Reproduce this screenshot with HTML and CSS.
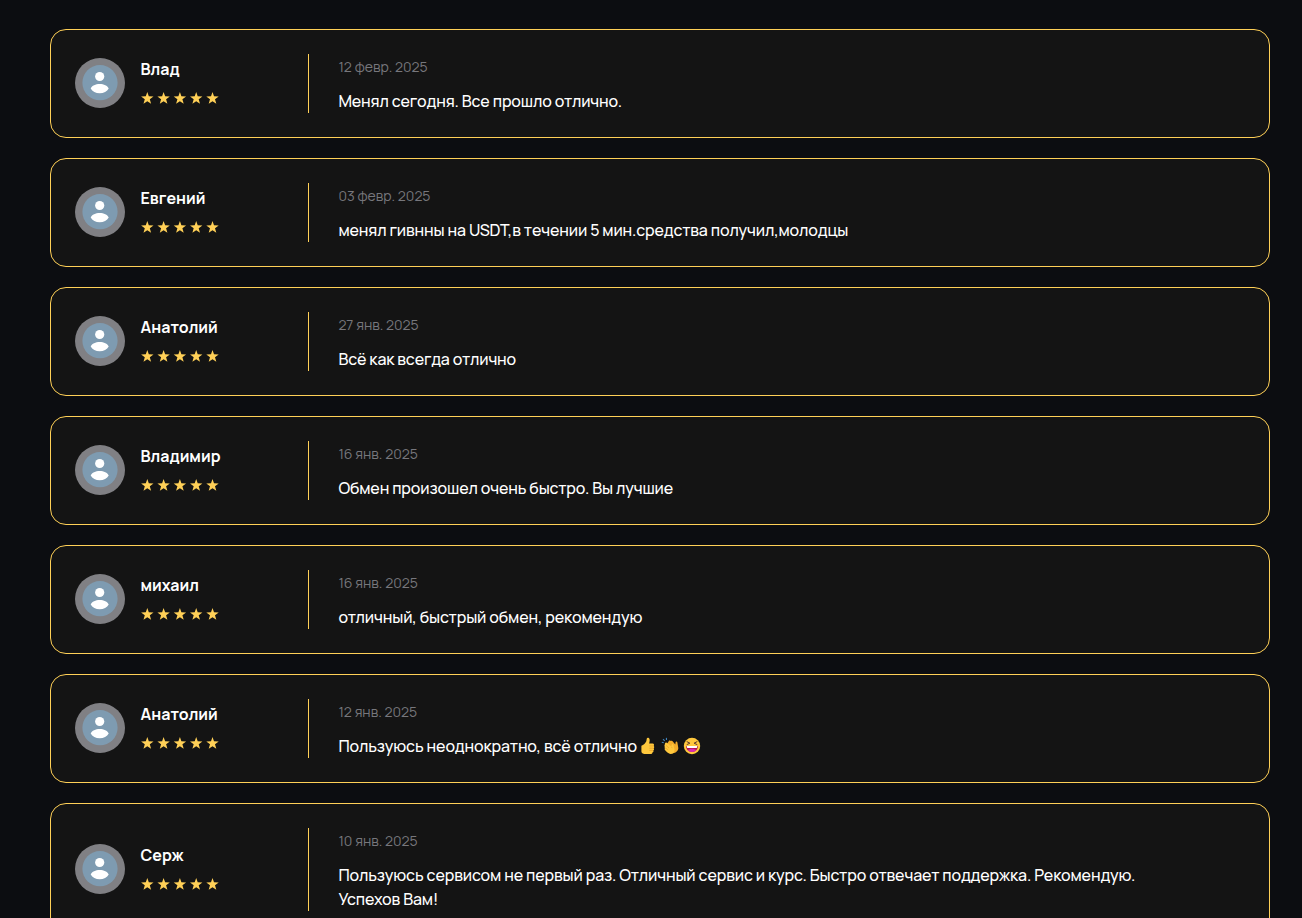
FILE: index.html
```html
<!DOCTYPE html>
<html lang="ru">

<head>
    <meta charset="UTF-8">
    <meta name="viewport" content="width=device-width, initial-scale=1.0">
    <title>Отзывы</title>
    <link rel="stylesheet" href="styles.css">
</head>

<body>
    <!-- shared icons -->
    <svg class="sprite" aria-hidden="true">
        <symbol id="avatar" viewBox="0 0 50 50">
            <circle cx="25" cy="25" r="25" fill="#808084" />
            <circle cx="25" cy="24.7" r="17.6" fill="#7e9bb1" />
            <circle cx="24.7" cy="18.5" r="4.6" fill="#fff" />
            <path d="M15.7 30.5C17 27.4 20.5 25.9 24.7 25.9s7.7 1.5 9 4.6c-1.6 3-5 4.7-9 4.7s-7.4-1.7-9-4.7z" fill="#fff" />
        </symbol>
        <symbol id="stars" viewBox="0 0 79 12">
            <path id="star" d="M6.3 0L7.8 4.3l4.7.1-3.7 2.9 1.3 4.5-3.8-2.6-3.8 2.6L3.8 7.3.1 4.4 4.8 4.3z" fill="#ffd057" />
            <use href="#star" x="16.3" />
            <use href="#star" x="32.6" />
            <use href="#star" x="48.9" />
            <use href="#star" x="65.2" />
        </symbol>
    </svg>

    <main class="reviews">
        <article class="review">
            <div class="author">
                <svg class="avatar"><use href="#avatar" /></svg>
                <div class="author-info">
                    <h3 class="name">Влад</h3>
                    <svg class="stars"><use href="#stars" /></svg>
                </div>
            </div>
            <div class="content">
                <time class="date">12 февр. 2025</time>
                <p class="text">Менял сегодня. Все прошло отлично.</p>
            </div>
        </article>

        <article class="review">
            <div class="author">
                <svg class="avatar"><use href="#avatar" /></svg>
                <div class="author-info">
                    <h3 class="name">Евгений</h3>
                    <svg class="stars"><use href="#stars" /></svg>
                </div>
            </div>
            <div class="content">
                <time class="date">03 февр. 2025</time>
                <p class="text">менял гивнны на USDT,в течении 5 мин.средства получил,молодцы</p>
            </div>
        </article>

        <article class="review">
            <div class="author">
                <svg class="avatar"><use href="#avatar" /></svg>
                <div class="author-info">
                    <h3 class="name">Анатолий</h3>
                    <svg class="stars"><use href="#stars" /></svg>
                </div>
            </div>
            <div class="content">
                <time class="date">27 янв. 2025</time>
                <p class="text">Всё как всегда отлично</p>
            </div>
        </article>

        <article class="review">
            <div class="author">
                <svg class="avatar"><use href="#avatar" /></svg>
                <div class="author-info">
                    <h3 class="name">Владимир</h3>
                    <svg class="stars"><use href="#stars" /></svg>
                </div>
            </div>
            <div class="content">
                <time class="date">16 янв. 2025</time>
                <p class="text">Обмен произошел очень быстро. Вы лучшие</p>
            </div>
        </article>

        <article class="review">
            <div class="author">
                <svg class="avatar"><use href="#avatar" /></svg>
                <div class="author-info">
                    <h3 class="name">михаил</h3>
                    <svg class="stars"><use href="#stars" /></svg>
                </div>
            </div>
            <div class="content">
                <time class="date">16 янв. 2025</time>
                <p class="text">отличный, быстрый обмен, рекомендую</p>
            </div>
        </article>

        <article class="review">
            <div class="author">
                <svg class="avatar"><use href="#avatar" /></svg>
                <div class="author-info">
                    <h3 class="name">Анатолий</h3>
                    <svg class="stars"><use href="#stars" /></svg>
                </div>
            </div>
            <div class="content">
                <time class="date">12 янв. 2025</time>
                <p class="text">Пользуюсь неоднократно, всё отлично<span class="emojis">
                    <svg class="emoji" viewBox="0 0 18 18">
                        <path d="M2.4 8.8C4.5 8 6.6 6 7.3 4.2L7.8 1.4c.3-1.1 2.3-.9 2.7.6.4 1.5 0 3.2-.4 4.6h3.5c1.5 0 1.9 1.6 1 2.3.9.5.8 1.9 0 2.3.7.6.5 1.9-.3 2.2.5.8 0 1.9-.9 2.1-.1 1.1-.8 1.5-2 1.5H7c-2.4 0-4.6-.6-4.6-2.6z" fill="#ffc83d" />
                        <path d="M10.3 8.9h4M10.3 11.2h4M10.3 13.4h3.6" fill="none" stroke="#e09420" stroke-width=".6" />
                    </svg>
                    <svg class="emoji" viewBox="0 0 18 18">
                        <path d="M.8 5.2l2 .5M2 2.2l1.7 1.6M5.4.9L5.5 3" fill="none" stroke="#4284bd" stroke-width="1.1" />
                        <path d="M6 7l2-3.2c.8-.8 1.6-.3 1.9.2.6-.6 1.5-.3 1.9.4l2.5 3 .3-2.2c.2-1 1.6-.8 1.8.3l.9 5.6c.1 3.4-3.7 5.9-7 4.8z" fill="#f5ae2b" />
                        <path d="M4.5 5.8c.5-.7 1.2-.4 1.7.1l4.3 3.8c0-1.8.3-2.8 1.2-2.6 1 .2.7 1.8 1.4 3.6 1.4 3.7-.7 6.5-3.5 6.2-2.3-.2-5.6-3.3-6-4.6-.2-.7.3-1.1.8-1-1-.9-1.2-1.6-.6-2.1-.5-.8-.5-1.4.1-1.7-.2-.7.1-1.3.6-1.7z" fill="#ffc83d" />
                        <path d="M5 8.3l3 2.8M4.7 11l2.5 2.2M10.4 10l1 1.2" fill="none" stroke="#e09420" stroke-width=".5" />
                    </svg>
                    <svg class="emoji" viewBox="0 0 18 18">
                        <circle cx="9" cy="9" r="8.2" fill="#ffc83d" />
                        <path d="M3.7 4.5l3.2 1.7-3.2 1.5M14.3 4.5l-3.2 1.7 3.2 1.5" fill="none" stroke="#5c3a31" stroke-width="1" />
                        <path d="M3.1 9.1h11.8c0 3.5-2.5 5.9-5.9 5.9s-5.9-2.4-5.9-5.9z" fill="#b4174a" />
                        <path d="M3.7 9.1h10.6l-.5 1.8H4.2z" fill="#fff" />
                        <path d="M4.8 13.3c1.6-2 6.8-2 8.4 0-2 2.3-6.4 2.3-8.4 0z" fill="#d72bb0" />
                    </svg>
                </span></p>
            </div>
        </article>

        <article class="review">
            <div class="author">
                <svg class="avatar"><use href="#avatar" /></svg>
                <div class="author-info">
                    <h3 class="name">Серж</h3>
                    <svg class="stars"><use href="#stars" /></svg>
                </div>
            </div>
            <div class="content">
                <time class="date">10 янв. 2025</time>
                <p class="text">Пользуюсь сервисом не первый раз. Отличный сервис и курс. Быстро отвечает поддержка. Рекомендую. Успехов Вам!</p>
            </div>
        </article>
    </main>
</body>

</html>
```
FILE: styles.css
```css
body {
    margin: 0;
    height: 918px;
    overflow: hidden;
    background: #0c0d11;
    color: #fff;
    font-family: Manrope, Inter, sans-serif;
    font-size: 16px;
    line-height: 24px;
}

.sprite {
    position: absolute;
    width: 0;
    height: 0;
}

.reviews {
    display: flex;
    flex-direction: column;
    gap: 20px;
    width: 1220px;
    padding: 29px 0 0 50px;
}

.review {
    display: flex;
    box-sizing: border-box;
    padding: 24px;
    background: #141414;
    border: 1px solid #ffd057;
    border-radius: 16px;
}

.author {
    display: flex;
    align-items: center;
    gap: 15.5px;
    width: 233px;
    padding-bottom: 1px;
    border-right: 1px solid #ffd057;
}

.avatar {
    width: 50px;
    height: 50px;
    flex-shrink: 0;
}

.author-info {
    display: flex;
    flex-direction: column;
    gap: 10.5px;
    padding-bottom: 5.5px;
}

.name {
    margin: 0;
    font-size: 16px;
    font-weight: 700;
}

.stars {
    display: block;
    width: 79px;
    height: 12px;
    margin-left: 0.5px;
}

.content {
    display: flex;
    flex-direction: column;
    gap: 10px;
    width: 810px;
    padding-left: 29.4px;
}

.date {
    color: #77777c;
    font-size: 14px;
    font-weight: 400;
    line-height: 25px;
}

.text {
    margin: 0;
    font-weight: 500;
    letter-spacing: -0.14px;
}

.emojis {
    display: inline-flex;
    gap: 4px;
    margin-left: 2px;
    vertical-align: -3px;
}

.emoji {
    width: 18px;
    height: 18px;
}
```
